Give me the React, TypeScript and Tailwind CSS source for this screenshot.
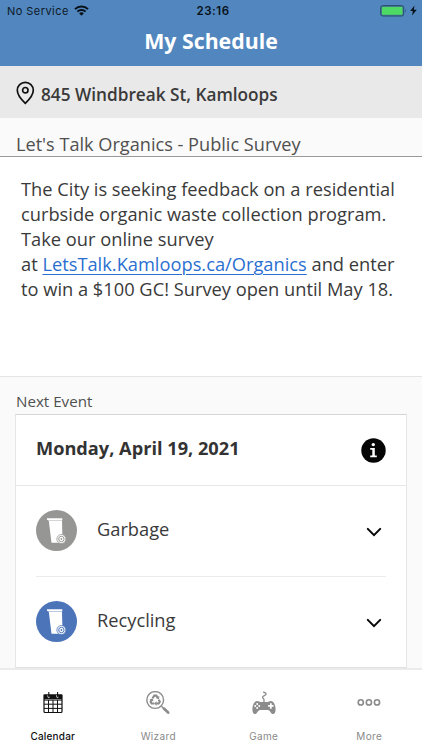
import type { ReactNode } from "react";

const rows = [
  { name: "Garbage", fill: "#969694" },
  { name: "Recycling", fill: "#4b74b9" },
];

function StatusBar() {
  return (
    <div className="grid h-[22px] grid-cols-3 items-center px-[7px] font-['Inter',sans-serif] text-[11px] leading-[22px] text-[#0d1826]">
      <div className="flex items-center gap-[5px]">
        <span className="whitespace-nowrap tracking-[0.45px]">No Service</span>
        <svg width="15" height="11" viewBox="0 0 15 11" fill="none" stroke="#081018" strokeWidth="2" className="-mt-[1px]">
          <path d="M1 4.1a9.2 9.2 0 0 1 13 0" />
          <path d="M3.4 6.6a5.8 5.8 0 0 1 8.2 0" />
          <path d="M7.5 10.8 5.1 8.3a3.5 3.5 0 0 1 4.8 0Z" fill="#081018" stroke="none" />
        </svg>
      </div>
      <span className="pl-[4px] text-center text-[11.5px] font-semibold tracking-[0.55px] text-[#081018]">23:16</span>
      <div className="-mr-[2px] flex items-center justify-end gap-[3px]">
        <svg width="27" height="12" viewBox="0 0 27 12">
          <rect x="0.7" y="0.6" width="23" height="10.4" rx="2" fill="#4d7d96" stroke="#25506f" />
          <rect x="2" y="1.9" width="20.4" height="7.8" rx="0.8" fill="#4cd964" />
          <path d="M25 4q1.6 1.8 0 3.8Z" fill="#25506f" />
        </svg>
        <svg width="7" height="11" viewBox="0 0 7 11" className="-mt-[1px]">
          <path d="M4.5 0.5 0.2 6h2.7L2 10.5 6.8 4.7H3.8Z" fill="#081018" />
        </svg>
      </div>
    </div>
  );
}

function BinIcon({ fill }: { fill: string }) {
  return (
    <svg width="41" height="41" viewBox="0 0 41 41" className="-mt-[2px] shrink-0">
      <circle cx="20.5" cy="20.5" r="20.5" fill={fill} />
      <path d="M11 8.2h15.3v2l-.3.5.4 15.3-4.4 6.8h-6.5L12.8 10.7 11 9.7Z" fill="#fff" />
      <path d="M12.5 10.5h13.5" stroke={fill} strokeWidth="0.4" />
      <circle cx="25.4" cy="29" r="4.5" fill="#fff" stroke={fill} strokeWidth="0.8" />
      <circle cx="25.4" cy="29" r="2.7" fill="none" stroke={fill} strokeWidth="1" />
      <circle cx="25.4" cy="29" r="0.9" fill={fill} />
    </svg>
  );
}

function CalendarIcon() {
  return (
    <svg width="24" height="24" viewBox="0 0 24 24">
      <path d="M3.4 3.3h17.2a1 1 0 0 1 1 1v4H2.4v-4a1 1 0 0 1 1-1Z" fill="#111" />
      <path d="M3 8v12.5a1 1 0 0 0 1 1h16a1 1 0 0 0 1-1V8" fill="none" stroke="#111" strokeWidth="1.2" />
      <path d="M3 9.1h18M3 13.2h18M3 17.4h18M7.5 9v12.5M12 9v12.5M16.5 9v12.5" stroke="#111" strokeWidth="1" />
      <path d="M6.9 4.2v1.6a.8.8 0 0 0 1.6 0M15.7 4.2v1.6a.8.8 0 0 0 1.6 0" fill="none" stroke="#fff" strokeWidth="0.8" />
      <path d="M7.8 1v4.3M16.6 1v4.3" stroke="#111" strokeWidth="1.1" />
    </svg>
  );
}

function WizardIcon() {
  return (
    <svg width="24" height="24" viewBox="0 0 24 24" fill="none" stroke="#8c8c8c">
      <circle cx="9.2" cy="9" r="8.4" strokeWidth="1.4" />
      <path d="m15.3 15 2 2" strokeWidth="1.3" />
      <path d="m17.9 17.6 4.2 4" strokeWidth="2.7" strokeLinecap="round" />
      <g strokeWidth="2.1">
        <path d="M6.6 7.1 8.3 4.6h2l1.2 1.8" />
        <path d="m12.7 8.8 1.1 2-1.1 1.7h-2.5" />
        <path d="M8.3 12.5H5.6l-1-1.8 1-1.9" />
      </g>
      <g fill="#8c8c8c" stroke="none">
        <path d="m13.4 5-.5 3.5-3.1-1.6Z" />
        <path d="m10.6 10.2-2.5 2.3 2.5 2.2Z" />
        <path d="m3.5 8.6 3.3-1.3.6 3.3Z" />
      </g>
    </svg>
  );
}

function GameIcon() {
  return (
    <svg width="24" height="24" viewBox="0 0 24 24">
      <path d="M11.1.9c1.8.6 3.3 1.6 3 2.5-.4 1.2-3.3 1.3-3.6 2.7-.2 1 1.5 1.4 1.5 2.8v2" fill="none" stroke="#8c8c8c" strokeWidth="1.3" />
      <path d="M5.2 10c1.5 0 2.3.9 3.2.9h7.2c.9 0 1.7-.9 3.2-.9 3.1 0 4.8 4.3 4.8 8.5 0 2.7-.9 4.5-2.6 4.5-2.3 0-2.8-4.1-5-4.1H8c-2.2 0-2.7 4.1-5 4.1-1.7 0-2.6-1.8-2.6-4.5C.4 14.3 2.1 10 5.2 10Z" fill="#8c8c8c" />
      <g fill="#fff">
        <circle cx="5.2" cy="12.9" r="1" />
        <circle cx="3.2" cy="14.9" r="1" />
        <circle cx="7.2" cy="14.9" r="1" />
        <circle cx="5.2" cy="16.9" r="1" />
        <path d="M18 12.2h1.7v1.9h1.9v1.7h-1.9v1.9H18v-1.9h-1.9v-1.7H18Z" />
      </g>
    </svg>
  );
}

function MoreIcon() {
  return (
    <svg width="24" height="24" viewBox="0 0 24 24" fill="none" stroke="#8a8a8a" strokeWidth="1.6">
      <circle cx="3.8" cy="11.4" r="2.6" />
      <circle cx="11.9" cy="11.4" r="2.6" />
      <circle cx="20" cy="11.4" r="2.6" />
    </svg>
  );
}

function Tab({ label, active, children }: { label: string; active?: boolean; children: ReactNode }) {
  return (
    <div className="flex flex-1 flex-col items-center pt-[21px]">
      {children}
      <span className={`mt-[13px] text-[10px] leading-4 ${active ? "font-medium tracking-[0.2px] text-[#111]" : "tracking-[0.35px] text-[#8a8a8a]"}`}>
        {label}
      </span>
    </div>
  );
}

export default function App() {
  return (
    <div className="flex h-[750px] w-[422px] flex-col overflow-hidden bg-[#fafafa] font-['Open_Sans','Noto_Sans',sans-serif] text-[#3a3a3a]">
      <header className="h-[66px] shrink-0 bg-[#5186be]">
        <StatusBar />
        <h1 className="text-center text-[21.3px] leading-[37px] font-bold text-white">My Schedule</h1>
      </header>

      <div className="flex h-[52px] shrink-0 items-center gap-[6px] bg-[#e9e9e9] pt-[5px] pl-[16px]">
        <svg width="19" height="24" viewBox="0 0 19 24" fill="none" stroke="#111" strokeWidth="1.7" className="-mt-[4px]">
          <path d="M9.3 22.3C5 18.3 1.3 13.5 1.3 9.3a8 8 0 0 1 16 0c0 4.2-3.7 9-8 13Z" />
          <circle cx="9.3" cy="9.2" r="2.7" />
        </svg>
        <span className="pt-[1px] text-[17.22px] font-semibold whitespace-nowrap">845 Windbreak St, Kamloops</span>
      </div>

      <h2 className="h-[39px] shrink-0 border-b border-[#999] pt-[12px] pl-[16px] text-[18.15px] leading-[28px] text-[#505050]">
        Let's Talk Organics - Public Survey
      </h2>
      <p className="h-[220px] shrink-0 border-b border-[#e4e4e4] bg-white pt-[19px] pl-[21px] text-[18.28px] leading-[25px] whitespace-nowrap">
        The City is seeking feedback on a residential<br />
        curbside organic waste collection program.<br />
        Take our online survey<br />
        at <a className="text-[#2a6fd0] underline decoration-1 underline-offset-[3px]">LetsTalk.Kamloops.ca/Organics</a> and enter<br />
        to win a $100 GC! Survey open until May 18.
      </p>

      <main className="flex h-[291px] shrink-0 flex-col px-[15px] pt-[15px]">
        <h3 className="h-[22px] pl-[1px] text-[15.15px] leading-[19px] text-[#505050]">Next Event</h3>
        <section className="h-[254px] border border-t-[#d4d4d9] border-r-[#e6e6e6] border-b-[#e0e0e0] border-l-[#e6e6e6] bg-white">
          <div className="flex h-[71px] items-center justify-between border-b border-[#e7e7e7] pr-[20px] pl-[20px]">
            <span className="-mt-[2px] text-[18.2px] font-bold text-[#333]">Monday, April 19, 2021</span>
            <svg width="25" height="25" viewBox="0 0 25 25">
              <circle cx="12.5" cy="12.5" r="12.2" fill="#050505" />
              <circle cx="12.3" cy="6.6" r="1.7" fill="#fff" />
              <path d="M9.2 10h4.6v7.6h2v1.7H9.2v-1.7h2.1v-5.9H9.2Z" fill="#fff" />
            </svg>
          </div>
          <div className="mx-[20px] divide-y divide-[#ececec]">
            {rows.map((r) => (
              <div key={r.name} className="flex h-[91px] items-center">
                <BinIcon fill={r.fill} />
                <span className="-mt-[5px] ml-[20px] flex-1 text-[18.25px]">{r.name}</span>
                <svg width="16" height="10" viewBox="0 0 16 10" fill="none" stroke="#050505" strokeWidth="2" className="mt-[1px] mr-[4.5px]">
                  <path d="m1.8 1.9 6.2 6.2 6.2-6.2" strokeLinecap="round" />
                </svg>
              </div>
            ))}
          </div>
        </section>
      </main>

      <nav className="flex h-[82px] shrink-0 border-t-2 border-[#ebebeb] bg-white font-['Inter',sans-serif]">
        <Tab label="Calendar" active><CalendarIcon /></Tab>
        <Tab label="Wizard"><WizardIcon /></Tab>
        <Tab label="Game"><GameIcon /></Tab>
        <Tab label="More"><MoreIcon /></Tab>
      </nav>
    </div>
  );
}
